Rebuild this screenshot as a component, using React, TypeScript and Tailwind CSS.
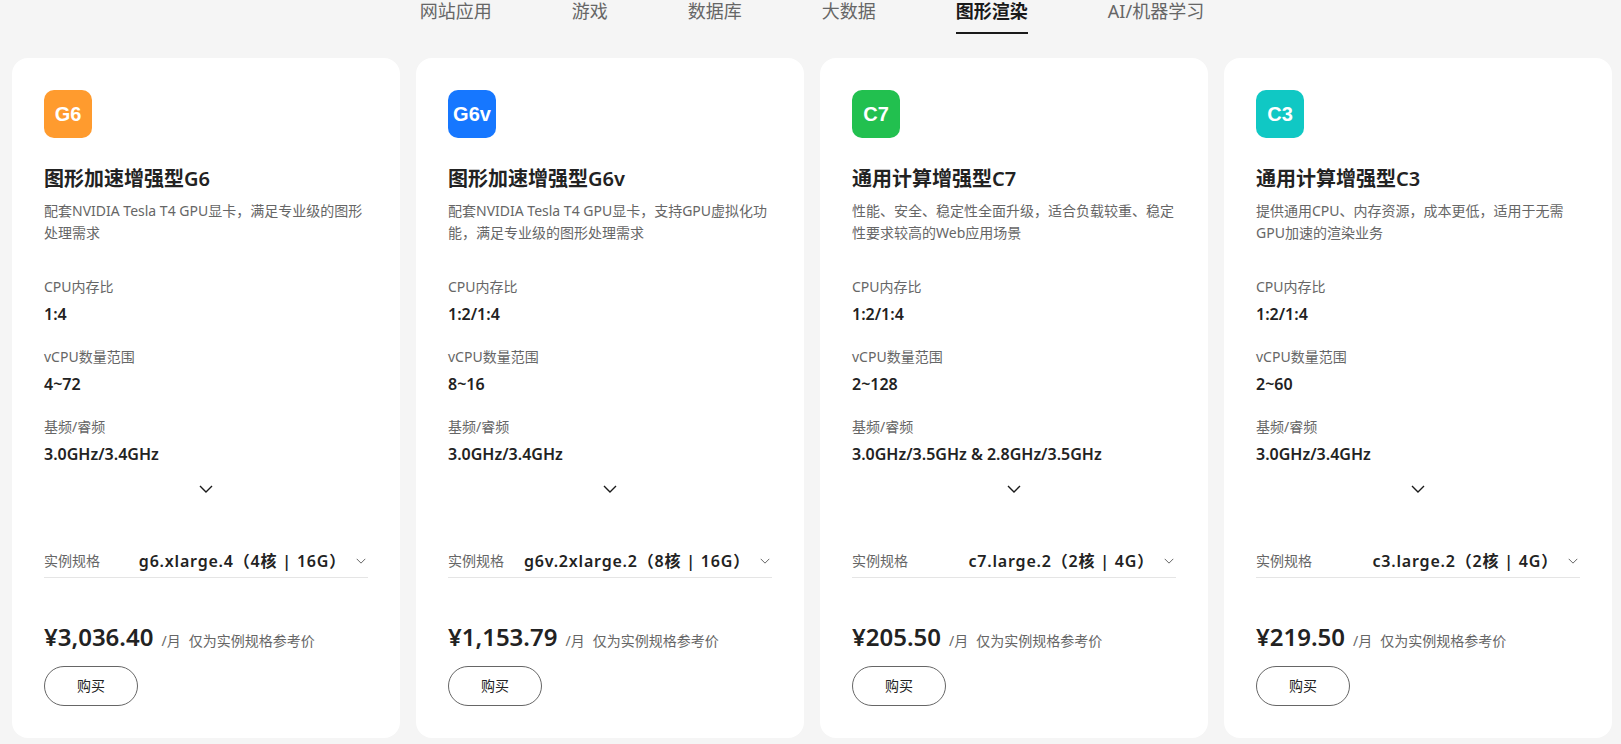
import React from 'react';

const tabs = ['网站应用', '游戏', '数据库', '大数据', '图形渲染', 'AI/机器学习'];

const cards = [
  {
    badge: 'G6',
    color: 'bg-[#ff9b2e]',
    title: '图形加速增强型G6',
    desc: '配套NVIDIA Tesla T4 GPU显卡，满足专业级的图形处理需求',
    ratio: '1:4',
    vcpu: '4~72',
    freq: '3.0GHz/3.4GHz',
    spec: 'g6.xlarge.4（4核 | 16G）',
    price: '¥3,036.40',
  },
  {
    badge: 'G6v',
    color: 'bg-[#1677ff]',
    title: '图形加速增强型G6v',
    desc: '配套NVIDIA Tesla T4 GPU显卡，支持GPU虚拟化功能，满足专业级的图形处理需求',
    ratio: '1:2/1:4',
    vcpu: '8~16',
    freq: '3.0GHz/3.4GHz',
    spec: 'g6v.2xlarge.2（8核 | 16G）',
    price: '¥1,153.79',
  },
  {
    badge: 'C7',
    color: 'bg-[#22c04f]',
    title: '通用计算增强型C7',
    desc: '性能、安全、稳定性全面升级，适合负载较重、稳定性要求较高的Web应用场景',
    ratio: '1:2/1:4',
    vcpu: '2~128',
    freq: '3.0GHz/3.5GHz & 2.8GHz/3.5GHz',
    spec: 'c7.large.2（2核 | 4G）',
    price: '¥205.50',
  },
  {
    badge: 'C3',
    color: 'bg-[#10c8c4]',
    title: '通用计算增强型C3',
    desc: '提供通用CPU、内存资源，成本更低，适用于无需GPU加速的渲染业务',
    ratio: '1:2/1:4',
    vcpu: '2~60',
    freq: '3.0GHz/3.4GHz',
    spec: 'c3.large.2（2核 | 4G）',
    price: '¥219.50',
  },
];

const Chevron = ({ className }: { className: string }) => (
  <svg viewBox="0 0 14 8" fill="none" stroke="currentColor" strokeWidth="1.4" className={className}>
    <path d="M1 1l6 6 6-6" />
  </svg>
);

const Spec = ({ label, value }: { label: string; value: string }) => (
  <div className="h-[70px]">
    <div className="text-sm leading-[22px] text-[#666666]">{label}</div>
    <div className="mt-[5px] text-base leading-[22px] font-semibold text-[#222222]">{value}</div>
  </div>
);

const App = () => {
  return (
    <div className="min-h-screen overflow-hidden bg-[#f5f5f5] font-['Noto_Sans','Noto_Sans_CJK_SC',sans-serif]">
      {/* Tabs */}
      <div className="ml-3 flex w-[1600px] justify-center gap-20">
        {tabs.map((tab) => (
          <div
            key={tab}
            className={
              tab === '图形渲染'
                ? 'h-[34px] border-b-2 border-[#1a1a1a] text-lg leading-[22px] font-bold text-[#1a1a1a]'
                : 'h-[34px] text-lg leading-[22px] text-[#666666]'
            }
          >
            {tab}
          </div>
        ))}
      </div>

      {/* Cards */}
      <div className="mt-6 ml-3 grid w-[1600px] grid-cols-4 gap-4">
        {cards.map((card) => (
          <div key={card.badge} className="h-[680px] rounded-2xl bg-white p-8">
            <div
              className={`flex h-12 w-12 items-center justify-center rounded-[10px] font-['Liberation_Sans',sans-serif] text-xl font-bold text-white ${card.color}`}
            >
              {card.badge}
            </div>
            <h3 className="mt-[27px] text-xl leading-7 font-semibold text-[#222222]">{card.title}</h3>
            <p className="mt-[7px] h-11 text-sm leading-[22px] text-[#666666]">{card.desc}</p>
            <div className="mt-8">
              <Spec label="CPU内存比" value={card.ratio} />
              <Spec label="vCPU数量范围" value={card.vcpu} />
              <Spec label="基频/睿频" value={card.freq} />
            </div>
            <div className="-mt-px flex justify-center">
              <Chevron className="h-2 w-[14px] text-[#1a1a1a]" />
            </div>
            <div className="mt-[51px] flex h-[34px] items-center border-b border-[#e5e5e5]">
              <span className="text-sm text-[#666666]">实例规格</span>
              <span className="ml-auto text-base font-semibold tracking-[0.8px] text-[#222222]">{card.spec}</span>
              <Chevron className="mr-[2px] ml-[10px] h-[6px] w-[10px] text-[#666666]" />
            </div>
            <div className="mt-[43px] flex items-baseline">
              <span className="text-2xl leading-8 font-semibold text-[#222222]">{card.price}</span>
              <span className="ml-2 text-sm text-[#666666]">/月</span>
              <span className="ml-2 text-sm text-[#666666]">仅为实例规格参考价</span>
            </div>
            <button className="mt-[13px] h-10 w-[94px] rounded-full border border-[#666666] text-sm text-[#222222]">
              购买
            </button>
          </div>
        ))}
      </div>
    </div>
  );
};

export default App;
